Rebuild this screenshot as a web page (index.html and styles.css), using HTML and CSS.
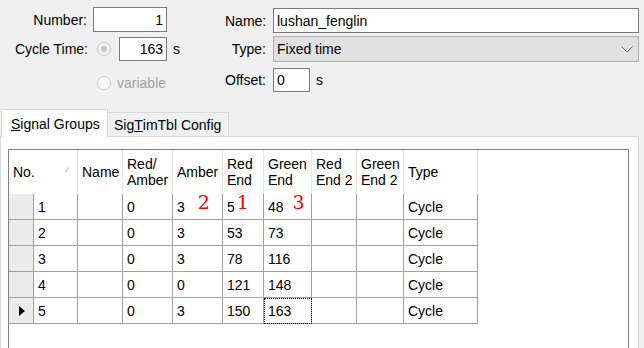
FILE: index.html
```html
<!DOCTYPE html>
<html lang="en">

<head>
    <meta charset="UTF-8">
    <title>Signal Groups</title>
    <link rel="stylesheet" href="styles.css">
</head>

<body>
    <div class="form">
        <div class="col-left">
            <div class="row r1">
                <span class="lbl w87">Number:</span>
                <div class="box num">1</div>
            </div>
            <div class="row r2">
                <span class="lbl w88">Cycle Time:</span>
                <span class="radio on"></span>
                <div class="box cyc">163</div>
                <span class="unit">s</span>
            </div>
            <div class="row r3">
                <span class="radio"></span>
                <span class="dis">variable</span>
            </div>
        </div>
        <div class="col-right">
            <div class="row q1">
                <span class="lbl w41">Name:</span>
                <div class="box name">lushan_fenglin</div>
            </div>
            <div class="row q2">
                <span class="lbl w41">Type:</span>
                <div class="combo">
                    <span>Fixed time</span>
                    <svg width="12" height="7" viewBox="0 0 12 7"><polyline points="0.5,0.5 6,6 11.5,0.5" fill="none" stroke="#606060" stroke-width="1"/></svg>
                </div>
            </div>
            <div class="row q3">
                <span class="lbl w41">Offset:</span>
                <div class="box off">0</div>
                <span class="unit">s</span>
            </div>
        </div>
    </div>

    <div class="tabs">
        <div class="tab active"><u>S</u>ignal Groups</div>
        <div class="tab">Sig<u>T</u>imTbl Config</div>
    </div>

    <div class="panel">
        <div class="gridbox">
            <div class="gv">
                <!-- 表头 -->
                <div class="hd span2">No.<svg class="sort" width="4" height="6" viewBox="0 0 4 6"><line x1="0.5" y1="5.5" x2="3.5" y2="0.5" stroke="#b5b5b5" stroke-width="1"/></svg></div>
                <div class="hd">Name</div>
                <div class="hd">Red/<br>Amber</div>
                <div class="hd">Amber</div>
                <div class="hd">Red<br>End</div>
                <div class="hd">Green<br>End</div>
                <div class="hd">Red<br>End 2</div>
                <div class="hd">Green<br>End 2</div>
                <div class="hd">Type</div>

                <!-- 第1行 -->
                <div class="rh"></div>
                <div class="c">1</div>
                <div class="c"></div>
                <div class="c">0</div>
                <div class="c">3<span class="mark m2">2</span></div>
                <div class="c">5<span class="mark m1">1</span></div>
                <div class="c">48<span class="mark m3">3</span></div>
                <div class="c"></div>
                <div class="c"></div>
                <div class="c">Cycle</div>

                <div class="rh"></div>
                <div class="c">2</div>
                <div class="c"></div>
                <div class="c">0</div>
                <div class="c">3</div>
                <div class="c">53</div>
                <div class="c">73</div>
                <div class="c"></div>
                <div class="c"></div>
                <div class="c">Cycle</div>

                <div class="rh"></div>
                <div class="c">3</div>
                <div class="c"></div>
                <div class="c">0</div>
                <div class="c">3</div>
                <div class="c">78</div>
                <div class="c">116</div>
                <div class="c"></div>
                <div class="c"></div>
                <div class="c">Cycle</div>

                <div class="rh"></div>
                <div class="c">4</div>
                <div class="c"></div>
                <div class="c">0</div>
                <div class="c">0</div>
                <div class="c">121</div>
                <div class="c">148</div>
                <div class="c"></div>
                <div class="c"></div>
                <div class="c">Cycle</div>

                <div class="rh cur"><i class="arrow"></i></div>
                <div class="c">5</div>
                <div class="c"></div>
                <div class="c">0</div>
                <div class="c">3</div>
                <div class="c">150</div>
                <div class="c focus">163</div>
                <div class="c"></div>
                <div class="c"></div>
                <div class="c">Cycle</div>
            </div>
        </div>
    </div>
</body>

</html>
```

FILE: styles.css
```css
html,
body {
    margin: 0;
    height: 348px;
    overflow: hidden;
}

body {
    background: #f0f0f0;
    font-family: "Liberation Sans", Arial, sans-serif;
    font-size: 14px;
    color: #000;
}

/* 顶部表单 */
.form {
    display: flex;
    height: 93px;
}

.col-left {
    width: 225px;
    padding-top: 7px;
}

.col-right {
    padding-top: 8px;
}

.row {
    display: flex;
    align-items: center;
}

.r1 {
    height: 25px;
}

.r2 {
    height: 24px;
    margin-top: 5px;
}

.r3 {
    height: 20px;
    margin-top: 12px;
    padding-left: 97px;
}

.q1 {
    height: 25px;
}

.q2 {
    height: 26px;
    margin-top: 3px;
}

.q3 {
    height: 24px;
    margin-top: 6px;
}

.lbl {
    text-align: right;
    white-space: nowrap;
}

.w87 {
    width: 87px;
}

.w88 {
    width: 88px;
}

.w41 {
    width: 41px;
}

.box {
    box-sizing: border-box;
    height: 100%;
    background: #fff;
    border: 1px solid #7a7a7a;
    display: flex;
    align-items: center;
    padding: 0 3px;
}

.num {
    width: 74px;
    margin-left: 6px;
    justify-content: flex-end;
}

.cyc {
    width: 48px;
    margin-left: 8px;
    justify-content: flex-end;
}

.name {
    width: 366px;
    margin-left: 7px;
}

.off {
    width: 37px;
    margin-left: 7px;
}

.unit {
    margin-left: 6px;
}

.combo {
    box-sizing: border-box;
    width: 366px;
    height: 100%;
    margin-left: 7px;
    background: #e1e1e1;
    border: 1px solid #adadad;
    display: flex;
    align-items: center;
    justify-content: space-between;
    padding: 0 5px 0 3px;
}

.radio {
    box-sizing: border-box;
    width: 14px;
    height: 14px;
    border-radius: 50%;
    border: 1px solid #c4c4c4;
    background: #fff;
    display: flex;
    align-items: center;
    justify-content: center;
}

.r2 .radio {
    margin-left: 9px;
}

.radio.on {
    background: #f4f4f4;
}

.radio.on::after {
    content: '';
    width: 6px;
    height: 6px;
    border-radius: 50%;
    background: #c5c5c5;
}

.dis {
    color: #a0a0a0;
    margin-left: 6px;
}

/* 选项卡 */
.tabs {
    display: flex;
    align-items: flex-end;
    height: 27px;
    margin-top: 16px;
    padding-left: 1px;
}

.tab {
    box-sizing: border-box;
    height: 24px;
    width: 121px;
    border: 1px solid #d9d9d9;
    border-left: none;
    border-bottom: none;
    background: #f0f0f0;
    padding-left: 6px;
    display: flex;
    align-items: center;
    white-space: nowrap;
}

.tab.active {
    position: relative;
    height: 28px;
    width: 107px;
    margin-bottom: -1px;
    border-left: 1px solid #d9d9d9;
    background: #fff;
    padding-left: 9px;
}

.panel {
    margin: 0 5px 0 0;
    height: 211px;
    border: 1px solid #d9d9d9;
    border-bottom: none;
    background: #fff;
}

/* 表格 */
.gridbox {
    width: 621px;
    height: 199px;
    box-sizing: border-box;
    margin: 12px 0 0 7px;
    border: 1px solid #7f7f7f;
    border-bottom: none;
    background: #fff;
}

.gv {
    display: grid;
    grid-template-columns: 25px 44px 45px 50px 50px 41px 48px 45px 47px 74px;
    grid-template-rows: 44px repeat(5, 26px);
}

.hd {
    box-sizing: border-box;
    border-right: 1px solid #e6e6e6;
    padding-left: 4px;
    display: flex;
    align-items: center;
    line-height: 16px;
}

.span2 {
    grid-column: span 2;
    justify-content: space-between;
    padding-right: 8px;
}

.sort {
    margin-bottom: 5px;
}

.c,
.rh {
    box-sizing: border-box;
    border-right: 1px solid #a0a0a0;
    border-bottom: 1px solid #a0a0a0;
    display: flex;
    align-items: center;
}

.c {
    padding-left: 4px;
    white-space: nowrap;
}

.rh {
    background: #ececec;
    justify-content: center;
}

.arrow {
    width: 0;
    height: 0;
    border-top: 5px solid transparent;
    border-bottom: 5px solid transparent;
    border-left: 6px solid #000;
    margin-left: 1px;
}

.focus {
    outline: 1px dotted #000;
    outline-offset: -1px;
}

/* 红色标注数字 */
.mark {
    font-family: "DejaVu Serif", "Liberation Serif", serif;
    font-size: 19px;
    line-height: 20px;
    color: #f00;
    align-self: flex-start;
    margin-top: -2px;
}

.m2 {
    margin-left: 13px;
}

.m1 {
    margin-left: 2px;
}

.m3 {
    margin-left: 9px;
}
```
